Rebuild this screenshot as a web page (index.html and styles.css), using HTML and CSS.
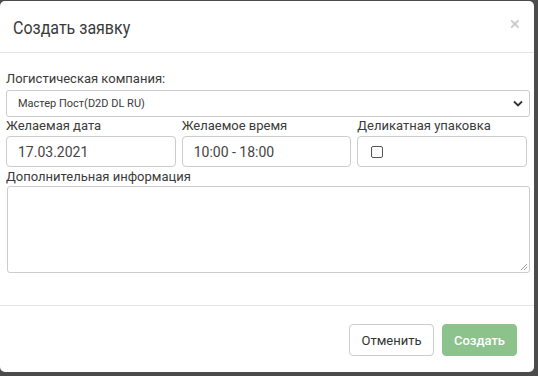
FILE: index.html
```html
<!DOCTYPE html>
<html lang="ru">
  <head>
    <meta charset="utf-8" />
    <title>Создать заявку</title>
    <link rel="stylesheet" href="styles.css">
  </head>
  <body>
    <div class="modal">
      <!--Header-->
      <div class="modal-header">
        <h4 class="modal-title">Создать заявку</h4>
        <span class="modal-close">&times;</span>
      </div>
      <!--Body-->
      <div class="modal-body">
        <label class="field-label">Логистическая компания:</label>
        <div class="select">
          <span>Мастер Пост(D2D DL RU)</span>
          <svg width="10" height="7" viewBox="0 0 10 7">
            <path d="M1 1.5l4 4 4-4" fill="none" stroke="#333" stroke-width="1.8"/>
          </svg>
        </div>
        <div class="row">
          <div class="col">
            <label class="field-label">Желаемая дата</label>
            <div class="input">17.03.2021</div>
          </div>
          <div class="col">
            <label class="field-label">Желаемое время</label>
            <div class="input">10:00 - 18:00</div>
          </div>
          <div class="col">
            <label class="field-label">Деликатная упаковка</label>
            <div class="input"><span class="checkbox"></span></div>
          </div>
        </div>
        <label class="field-label">Дополнительная информация</label>
        <div class="textarea">
          <svg class="grip" width="8" height="8" viewBox="0 0 8 8">
            <path d="M7 1L1 7M7 4L4 7" stroke="#888" stroke-width="0.8"/>
          </svg>
        </div>
      </div>
      <!--Footer-->
      <div class="modal-footer">
        <button class="btn btn-default" type="button">Отменить</button>
        <button class="btn btn-success" type="button">Создать</button>
      </div>
    </div>
  </body>
</html>
```

FILE: styles.css
```css
body {
  margin: 0;
  background-color: #4b4b4b;
  font-family: Roboto, "Liberation Sans", sans-serif;
  color: #3a3a3a;
}
.modal {
  width: 534px;
  height: 371px;
  margin-top: 1px;
  background-color: #fff;
  border-radius: 5px;
  display: flex;
  flex-direction: column;
}
.modal-header {
  height: 51px;
  border-bottom: 1px solid #e5e5e5;
  display: flex;
  align-items: center;
  justify-content: space-between;
  padding: 0 14px 0 13px;
}
.modal-title {
  margin: 0;
  font-size: 16px;
  font-weight: 400;
  color: #3a3a3a;
  margin-top: 1px;
  transform: scaleY(1.1);
}
.modal-close {
  font-size: 19px;
  color: #c8c8c8;
  margin-top: -7px;
}
.modal-body {
  padding: 18px 4px 0 6px;
  flex: 1;
  display: flex;
  flex-direction: column;
}
.field-label {
  display: block;
  font-size: 13px;
  line-height: 15px;
  color: #3a3a3a;
  margin-bottom: 4px;
}
.select {
  height: 25px;
  border: 1px solid #ccc;
  border-radius: 3px;
  display: flex;
  align-items: center;
  justify-content: space-between;
  padding: 0 6px 0 11px;
  font-size: 11px;
  margin-bottom: 1px;
}
.row {
  display: flex;
  gap: 6px;
  margin-right: 3px;
}
.col {
  flex: 1;
}
.row .field-label {
  margin-bottom: 3px;
}
.input {
  height: 29px;
  border: 1px solid #ccc;
  border-radius: 4px;
  display: flex;
  align-items: center;
  padding: 0 11px;
  font-size: 14px;
  color: #444;
  margin-bottom: 2px;
}
.checkbox {
  width: 10px;
  height: 10px;
  border: 1px solid #555;
  border-radius: 2px;
  margin-left: 2px;
}
.textarea {
  height: 85px;
  border: 1px solid #ccc;
  border-radius: 3px;
  margin-left: 1px;
  position: relative;
  margin-top: -2px;
}
.grip {
  position: absolute;
  right: 1px;
  bottom: 1px;
}
.modal-footer {
  height: 66px;
  border-top: 1px solid #e5e5e5;
  display: flex;
  align-items: center;
  justify-content: flex-end;
  gap: 8px;
  padding-right: 17px;
}
.btn {
  height: 32px;
  font-family: Roboto, "Liberation Sans", sans-serif;
  font-size: 13px;
  border-radius: 4px;
  padding: 0 10px;
  margin-top: 2px;
}
.btn-default {
  background-color: #fff;
  border: 1px solid #ccc;
  color: #333;
  width: 85px;
}
.btn-success {
  background-color: #8cc28c;
  border: 1px solid #8cc28c;
  color: #fff;
  font-weight: 500;
  width: 75px;
}
```
